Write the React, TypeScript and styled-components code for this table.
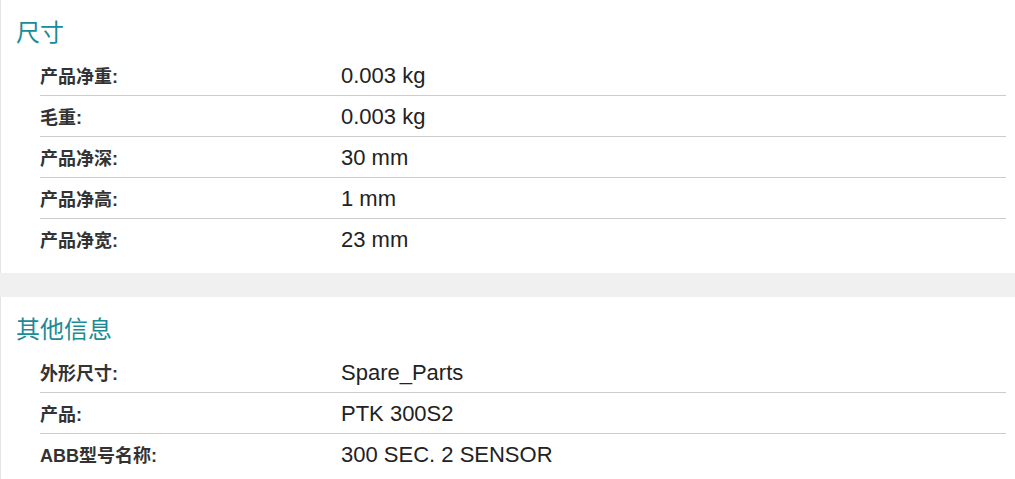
import styled, { createGlobalStyle } from "styled-components";

const GlobalStyle = createGlobalStyle`
  html, body {
    margin: 0;
    padding: 0;
    background-color: #f0f0f0;
  }
  body {
    font-family: "Liberation Sans", "Noto Sans CJK SC", Arial, sans-serif;
  }
`;

const Page = styled.div`
  width: 1015px;
  display: flex;
  flex-direction: column;
  gap: 24px;
`;

const Section = styled.section`
  background-color: #ffffff;
  border-left: 1px solid #e4e4e4;
  padding: 15px 9px 14px 15px;
  display: flex;
  flex-direction: column;
`;

const Title = styled.h2`
  margin: 0 0 8px 0;
  font-family: "Noto Sans CJK SC", "Liberation Sans", sans-serif;
  font-size: 24px;
  font-weight: 400;
  line-height: 32px;
  color: #1b8b96;
`;

const Rows = styled.div`
  margin-left: 24px;
  display: flex;
  flex-direction: column;
`;

const Row = styled.div`
  display: flex;
  align-items: center;
  height: 40px;
  border-bottom: 1px solid #cccccc;

  &:last-child {
    border-bottom: none;
  }
`;

const Label = styled.div`
  width: 301px;
  flex-shrink: 0;
  padding-top: 4px;
  font-family: "Liberation Sans", "Noto Sans CJK SC", sans-serif;
  font-size: 18px;
  line-height: 1;
  font-weight: 700;
  color: #333333;
`;

const Value = styled.div`
  font-family: "Liberation Sans", "Noto Sans CJK SC", sans-serif;
  font-size: 22px;
  line-height: 1;
  padding-top: 1px;
  color: #222222;
`;

const sections = [
  {
    title: "尺寸",
    rows: [
      ["产品净重:", "0.003 kg"],
      ["毛重:", "0.003 kg"],
      ["产品净深:", "30 mm"],
      ["产品净高:", "1 mm"],
      ["产品净宽:", "23 mm"],
    ],
  },
  {
    title: "其他信息",
    rows: [
      ["外形尺寸:", "Spare_Parts"],
      ["产品:", "PTK 300S2"],
      ["ABB型号名称:", "300 SEC. 2 SENSOR"],
    ],
  },
];

export default function App() {
  return (
    <>
      <GlobalStyle />
      <Page>
        {sections.map((section) => (
          <Section key={section.title}>
            <Title>{section.title}</Title>
            <Rows>
              {section.rows.map(([label, value]) => (
                <Row key={label}>
                  <Label>{label}</Label>
                  <Value>{value}</Value>
                </Row>
              ))}
            </Rows>
          </Section>
        ))}
      </Page>
    </>
  );
}
